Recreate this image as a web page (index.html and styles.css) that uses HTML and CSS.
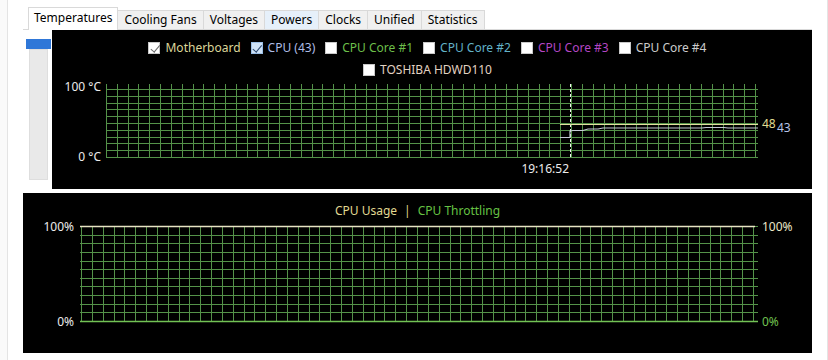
FILE: index.html
```html
<!DOCTYPE html>
<html lang="en">
<head>
  <meta charset="UTF-8">
  <title>Sensor Graphs</title>
  <link rel="stylesheet" href="styles.css">
</head>
<body>
  <div class="frame">
    <div class="tabs">
      <div class="tab active">Temperatures</div>
      <div class="tab">Cooling Fans</div>
      <div class="tab">Voltages</div>
      <div class="tab hover">Powers</div>
      <div class="tab">Clocks</div>
      <div class="tab">Unified</div>
      <div class="tab">Statistics</div>
    </div>

    <div class="panel">
      <div class="side">
        <div class="side-thumb"></div>
        <div class="side-track"></div>
      </div>

      <div class="chart temp">
        <svg class="plot" id="tempPlot" width="760" height="159">
          <g class="grid" id="tempGrid"></g>
          <line class="cursor" x1="518.5" y1="54" x2="518.5" y2="127"></line>
          <path class="series mb" d="M508 94.5 H706"></path>
          <path class="series cpu" d="M508 107.5 H518 V101 L521 100.5 H531 L536 99 H546 L551 98 H650 L654 97.5 H672 L676 98 H706"></path>
          <text class="axis" x="49" y="61" text-anchor="end">100 °C</text>
          <text class="axis" x="49" y="131" text-anchor="end">0 °C</text>
          <text class="axis" x="517" y="143" text-anchor="end">19:16:52</text>
          <text class="value mb" x="710" y="98">48</text>
          <text class="value cpu" x="725" y="102">43</text>
        </svg>

        <div class="legend">
          <div class="legend-row">
            <label class="item mb"><span class="box checked"></span>Motherboard</label>
            <label class="item cpu"><span class="box checked blue"></span>CPU (43)</label>
            <label class="item core1"><span class="box"></span>CPU Core #1</label>
            <label class="item core2"><span class="box"></span>CPU Core #2</label>
            <label class="item core3"><span class="box"></span>CPU Core #3</label>
            <label class="item core4"><span class="box"></span>CPU Core #4</label>
          </div>
          <div class="legend-row">
            <label class="item disk"><span class="box"></span>TOSHIBA HDWD110</label>
          </div>
        </div>
      </div>
    </div>

    <div class="chart usage">
      <svg class="plot" id="usagePlot" width="789" height="160">
        <g class="grid" id="usageGrid"></g>
        <line class="top-line" x1="57" y1="33.5" x2="732" y2="33.5"></line>
        <line class="bottom-line" x1="57" y1="128.5" x2="735" y2="128.5"></line>
        <text class="axis" x="51" y="38" text-anchor="end">100%</text>
        <text class="axis" x="51" y="133" text-anchor="end">0%</text>
        <text class="value usage-c" x="739" y="38">100%</text>
        <text class="value throttle" x="739" y="133">0%</text>
      </svg>
      <div class="legend">
        <div class="legend-row">
          <span class="usage-c">CPU Usage</span>
          <span class="sep">|</span>
          <span class="throttle">CPU Throttling</span>
        </div>
      </div>
    </div>
  </div>

  <script>
    const NS = 'http://www.w3.org/2000/svg';

    function addLine(group, x1, y1, x2, y2) {
      const line = document.createElementNS(NS, 'line');
      line.setAttribute('x1', x1);
      line.setAttribute('y1', y1);
      line.setAttribute('x2', x2);
      line.setAttribute('y2', y2);
      group.appendChild(line);
    }

    function drawGrid(id, g) {
      const group = document.getElementById(id);
      for (let i = 0; i <= g.cols; i++) {
        const x = Math.round(g.colLeft + i * (g.colRight - g.colLeft) / g.cols) + 0.5;
        addLine(group, x, g.tickTop, x, g.bottom);
      }
      for (let j = 0; j <= g.rows; j++) {
        const y = Math.round(g.top + j * (g.bottom - g.top) / g.rows) + 0.5;
        addLine(group, g.left, y, g.right, y);
      }
    }

    drawGrid('tempGrid', { left: 54, right: 706, colLeft: 54, colRight: 703, top: 59, bottom: 127, tickTop: 54, cols: 60, rows: 10 });
    drawGrid('usageGrid', { left: 57, right: 735, colLeft: 58, colRight: 730, top: 33, bottom: 128, tickTop: 33, cols: 62, rows: 11 });
  </script>
</body>
</html>
```

FILE: styles.css
```css
body {
  margin: 0;
  background: #fafafa;
  font-family: 'Noto Sans', 'Open Sans', sans-serif;
  font-size: 12px;
  color: #000;
}

.frame {
  margin-left: 7px;
  width: 819px;
  height: 360px;
  border-left: 1px solid #e4e4e4;
  border-right: 1px solid #e4e4e4;
  background: #fff;
}

.tabs {
  display: flex;
  align-items: flex-end;
  height: 22px;
  padding: 7px 0 0 20px;
}

.tab {
  height: 19px;
  line-height: 18px;
  padding: 0 6px;
  margin-left: -1px;
  background: #f0f0f0;
  border: 1px solid #d9d9d9;
  border-bottom: none;
  box-sizing: border-box;
  white-space: nowrap;
}

.tab.hover {
  background: #e6f0fa;
}

.tab.active {
  position: relative;
  z-index: 2;
  height: 23px;
  line-height: 20px;
  margin-left: 0;
  margin-bottom: -1px;
  padding: 0 5px;
  background: #fff;
}

.panel {
  display: flex;
  margin-left: 15px;
  width: 789px;
  border-top: 1px solid #d9d9d9;
}

.side {
  width: 29px;
  height: 159px;
  padding-top: 9px;
  box-sizing: border-box;
}

.side-thumb {
  width: 25px;
  height: 10px;
  margin-left: 3px;
  background: #2f77d8;
}

.side-track {
  width: 19px;
  height: 131px;
  margin-left: 6px;
  background: #e9e9e9;
  border: 1px solid #dedede;
  box-sizing: border-box;
}

.chart {
  position: relative;
  background: #000;
}

.chart.temp {
  width: 760px;
  height: 159px;
}

.chart.usage {
  width: 789px;
  height: 160px;
  margin: 4px 0 0 15px;
}

.plot {
  position: absolute;
  top: 0;
  left: 0;
}

.grid line {
  stroke: #549249;
  stroke-width: 1;
}

.cursor {
  stroke: #f2f2f2;
  stroke-width: 1;
  stroke-dasharray: 3 2;
}

.series {
  fill: none;
  stroke-width: 1.2;
}

.series.mb { stroke: #e2dea0; }
.series.cpu { stroke: #c4cad4; }

.top-line {
  stroke: #e8e4c4;
  stroke-width: 1.3;
}

.bottom-line {
  stroke: #72c254;
  stroke-width: 1.3;
}

.axis,
.value {
  font-family: 'Noto Sans', 'Open Sans', sans-serif;
  font-size: 12px;
}

.axis { fill: #ececec; }
.value.mb { fill: #e2dc90; }
.value.cpu { fill: #b6c4ea; }
.value.usage-c { fill: #ece8c8; }
.value.throttle { fill: #70c250; }

.legend {
  position: relative;
  display: flex;
  flex-direction: column;
  gap: 8px;
  padding: 11px 9px 0 0;
}

.legend-row {
  display: flex;
  justify-content: center;
  align-items: center;
  gap: 10px;
  height: 14px;
  line-height: 14px;
  white-space: nowrap;
}

.item {
  display: flex;
  align-items: center;
  gap: 5px;
}

.box {
  position: relative;
  width: 12px;
  height: 12px;
  background: #fff;
  border: 1px solid #c8c8c8;
  box-sizing: border-box;
}

.box.blue {
  background: #cfe2f6;
  border-color: #9cbfe6;
}

.box.checked::after {
  content: '';
  position: absolute;
  left: 3.5px;
  top: 0;
  width: 3.5px;
  height: 7.5px;
  border: solid #6a6a6a;
  border-width: 0 1.6px 1.6px 0;
  transform: rotate(40deg);
}

.box.blue::after {
  border-color: #2c4a70;
}

.item.mb { color: #dcd69a; }
.item.cpu { color: #aebde6; }
.item.core1 { color: #6cbf4a; }
.item.core2 { color: #62b2c8; }
.item.core3 { color: #b446c4; }
.item.core4 { color: #cccccc; }
.item.disk { color: #e2d2c2; }

.usage .legend {
  padding: 11px 0 0 0;
}

.usage .legend-row {
  gap: 7px;
}

.usage-c { color: #e2da92; }
.sep { color: #e2da92; }
.throttle { color: #66c244; }
```
